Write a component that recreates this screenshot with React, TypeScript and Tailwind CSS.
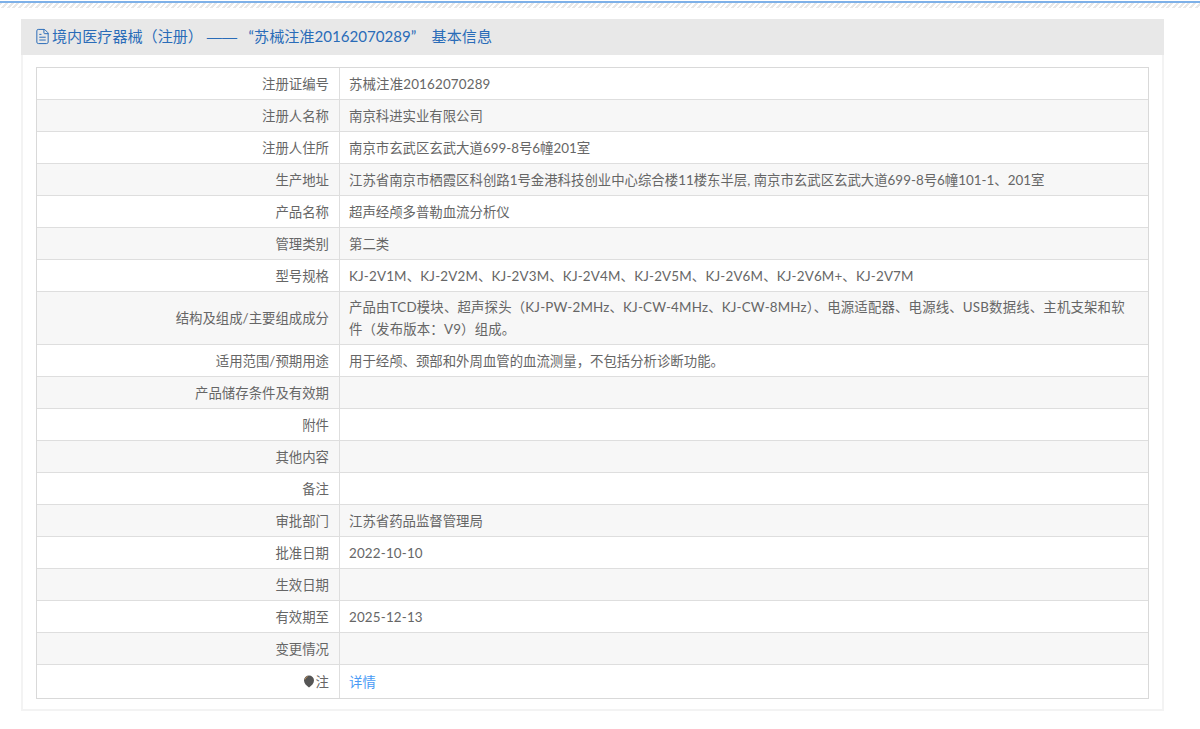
import { FileText } from 'lucide-react';
import React from 'react';

const rows: { label: string; value?: string; tall?: boolean; wide?: boolean }[] = [
  { label: '注册证编号', value: '苏械注准20162070289', wide: true },
  { label: '注册人名称', value: '南京科进实业有限公司' },
  { label: '注册人住所', value: '南京市玄武区玄武大道699-8号6幢201室' },
  { label: '生产地址', value: '江苏省南京市栖霞区科创路1号金港科技创业中心综合楼11楼东半层, 南京市玄武区玄武大道699-8号6幢101-1、201室' },
  { label: '产品名称', value: '超声经颅多普勒血流分析仪' },
  { label: '管理类别', value: '第二类' },
  { label: '型号规格', value: 'KJ-2V1M、KJ-2V2M、KJ-2V3M、KJ-2V4M、KJ-2V5M、KJ-2V6M、KJ-2V6M+、KJ-2V7M', wide: true },
  { label: '结构及组成/主要组成成分', value: '产品由TCD模块、超声探头（KJ-PW-2MHz、KJ-CW-4MHz、KJ-CW-8MHz）、电源适配器、电源线、USB数据线、主机支架和软件（发布版本：V9）组成。', tall: true, wide: true },
  { label: '适用范围/预期用途', value: '用于经颅、颈部和外周血管的血流测量，不包括分析诊断功能。' },
  { label: '产品储存条件及有效期' },
  { label: '附件' },
  { label: '其他内容' },
  { label: '备注' },
  { label: '审批部门', value: '江苏省药品监督管理局' },
  { label: '批准日期', value: '2022-10-10', wide: true },
  { label: '生效日期' },
  { label: '有效期至', value: '2025-12-13', wide: true },
  { label: '变更情况' },
];

const App: React.FC = () => {
  return (
    <div className="h-[729px] overflow-hidden bg-white font-['Lato','Noto_Sans_CJK_SC',sans-serif] text-[13.4px] leading-[22px] text-[#666]">
      <div className="mt-[1px] h-[7px] border-t-[2px] border-[#7db0e8] bg-[repeating-linear-gradient(135deg,#e8e8e8_0px,#e8e8e8_2px,#ffffff_2px,#ffffff_4px)]" />
      <div className="ml-[21px] mt-[11px] h-[692px] w-[1143px] border-2 border-t-0 border-[#f3f3f3]">
        <div className="-mx-[2px] flex h-[36px] items-center bg-[#e8e8e8] pb-[2px] pl-[13px] text-[15.1px] text-[#2a6cb8]">
          <FileText className="h-[17px] w-[17px]" strokeWidth={1.4} />
          <span className="ml-[1px]">
            境内医疗器械（注册）&nbsp;
            <span className="font-['Liberation_Sans',sans-serif]">——</span>
            &nbsp;&nbsp;&nbsp;“苏械注准20162070289”&nbsp;&nbsp;&nbsp;&nbsp;基本信息
          </span>
        </div>
        <div className="ml-[13px] mt-[12px] w-[1113px] border border-[#d9d9d9]">
          {rows.map((r, i) => (
            <div
              key={r.label}
              className={`flex border-b border-[#dedede] ${r.tall ? 'h-[53px]' : 'h-[32px]'} ${i % 2 === 1 ? 'bg-[#f7f7f7]' : 'bg-white'}`}
            >
              <div className="flex w-[303px] shrink-0 items-center justify-end border-r border-[#dedede] pr-[10px]">{r.label}</div>
              <div className={`flex flex-1 items-center pl-[9px] pr-[16px] ${r.wide ? 'tracking-[0.17px]' : ''}`}>{r.value}</div>
            </div>
          ))}
          <div className="flex h-[33px] bg-white">
            <div className="flex w-[303px] shrink-0 items-center justify-end border-r border-[#dedede] pr-[10px]">
              <svg viewBox="0 0 12 13" className="mr-[1px] h-[13px] w-[12px]">
                <path d="M6 12.500C3.500 10.500 1 8.500 1 5.500A5 5 0 0 1 11 5.500C11 8.500 8.500 10.500 6 12.500z" fill="#555" />
                <path d="M2 4.500A4 4 0 0 1 4.800 1.500" stroke="#b58a5a" fill="none" />
              </svg>
              注
            </div>
            <div className="flex flex-1 items-center pl-[9px] text-[#4a9bf5]">详情</div>
          </div>
        </div>
      </div>
    </div>
  );
};

export default App;
